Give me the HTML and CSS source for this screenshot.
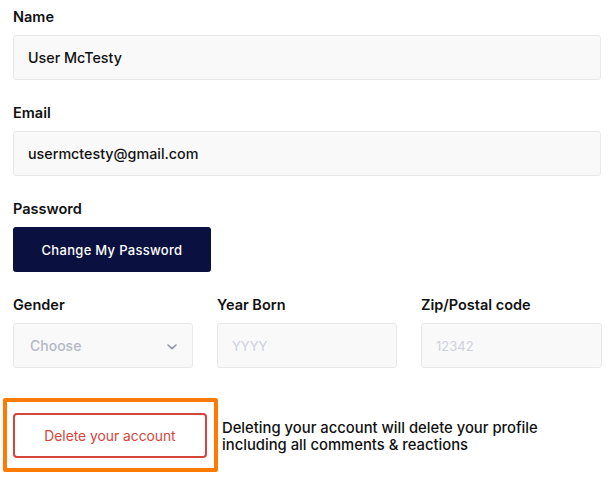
FILE: index.html
```html
<!DOCTYPE html>
<html>
<head>
<meta charset="utf-8">
<link rel="stylesheet" href="styles.css">
</head>
<body>
<form class="form">
  <div class="field">
    <label class="label">Name</label>
    <div class="input"><span class="value">User McTesty</span></div>
  </div>
  <div class="field">
    <label class="label">Email</label>
    <div class="input"><span class="value">usermctesty@gmail.com</span></div>
  </div>
  <div class="field">
    <label class="label">Password</label>
    <button type="button" class="btn-primary">Change My Password</button>
  </div>
  <div class="row">
    <div class="field col">
      <label class="label">Gender</label>
      <div class="input select"><span class="choose">Choose</span>
        <svg class="chevron" width="10" height="6" viewBox="0 0 10 6"><path d="M1 1 L5 4.6 L9 1" fill="none" stroke="#8e93a3" stroke-width="1.6" stroke-linecap="round" stroke-linejoin="round"/></svg>
      </div>
    </div>
    <div class="field col">
      <label class="label">Year Born</label>
      <div class="input"><span class="placeholder">YYYY</span></div>
    </div>
    <div class="field col">
      <label class="label">Zip/Postal code</label>
      <div class="input"><span class="placeholder">12342</span></div>
    </div>
  </div>
  <div class="danger">
    <div class="highlight">
      <button type="button" class="btn-danger">Delete your account</button>
    </div>
    <p class="note">Deleting your account will delete your profile<br>including all comments &amp; reactions</p>
  </div>
</form>
</body>
</html>
```
FILE: styles.css
```css
html, body {
  margin: 0;
  padding: 0;
  background: #ffffff;
}
body {
  font-family: "Inter", "Noto Sans", sans-serif;
  color: #111111;
  padding: 7px 13px 0 13px;
}
.form {
  display: flex;
  flex-direction: column;
}
.field {
  display: flex;
  flex-direction: column;
  margin-bottom: 23px;
}
.label {
  font-size: 14.5px;
  font-weight: 600;
  line-height: 20px;
  height: 20px;
  margin-bottom: 8px;
  color: #111111;
}
.input {
  box-sizing: border-box;
  height: 45px;
  border: 1px solid #e8e8e8;
  border-radius: 3px;
  background: #f9f9f9;
  display: flex;
  align-items: center;
  padding: 0 14px;
}
.value {
  font-size: 14.3px;
  font-weight: 500;
  color: #111111;
}
.btn-primary {
  box-sizing: border-box;
  width: 198px;
  height: 45px;
  border: none;
  border-radius: 3px;
  background: #0a1140;
  color: #ffffff;
  font-family: inherit;
  font-size: 13px;
  font-weight: 500;
  letter-spacing: 0.3px;
  padding: 0;
}
.row {
  display: grid;
  grid-template-columns: 180px 180px 181px;
  column-gap: 24px;
}
.col {
  margin-bottom: 0;
}
.select {
  justify-content: space-between;
  padding: 0 15px 0 16px;
}
.choose {
  font-size: 14px;
  font-weight: 500;
  color: #b3b8c7;
}
.chevron {
  margin-top: 2px;
}
.placeholder {
  font-size: 13px;
  color: #ced1dc;
}
.danger {
  display: flex;
  align-items: center;
  margin-top: 30px;
  margin-left: -10px;
}
.highlight {
  box-sizing: border-box;
  width: 215px;
  height: 74px;
  border: 4px solid #ff7a00;
  border-radius: 2px;
  padding: 11px 8px 0 6px;
}
.btn-danger {
  box-sizing: border-box;
  width: 194px;
  height: 45px;
  background: #ffffff;
  border: 2px solid #d4453b;
  border-radius: 4px;
  color: #d4453b;
  font-family: inherit;
  font-size: 13.8px;
  font-weight: 400;
  padding: 0;
}
.note {
  margin: 4px 0 0 4px;
  font-size: 14.8px;
  font-weight: 500;
  line-height: 17px;
  color: #111111;
}
```
